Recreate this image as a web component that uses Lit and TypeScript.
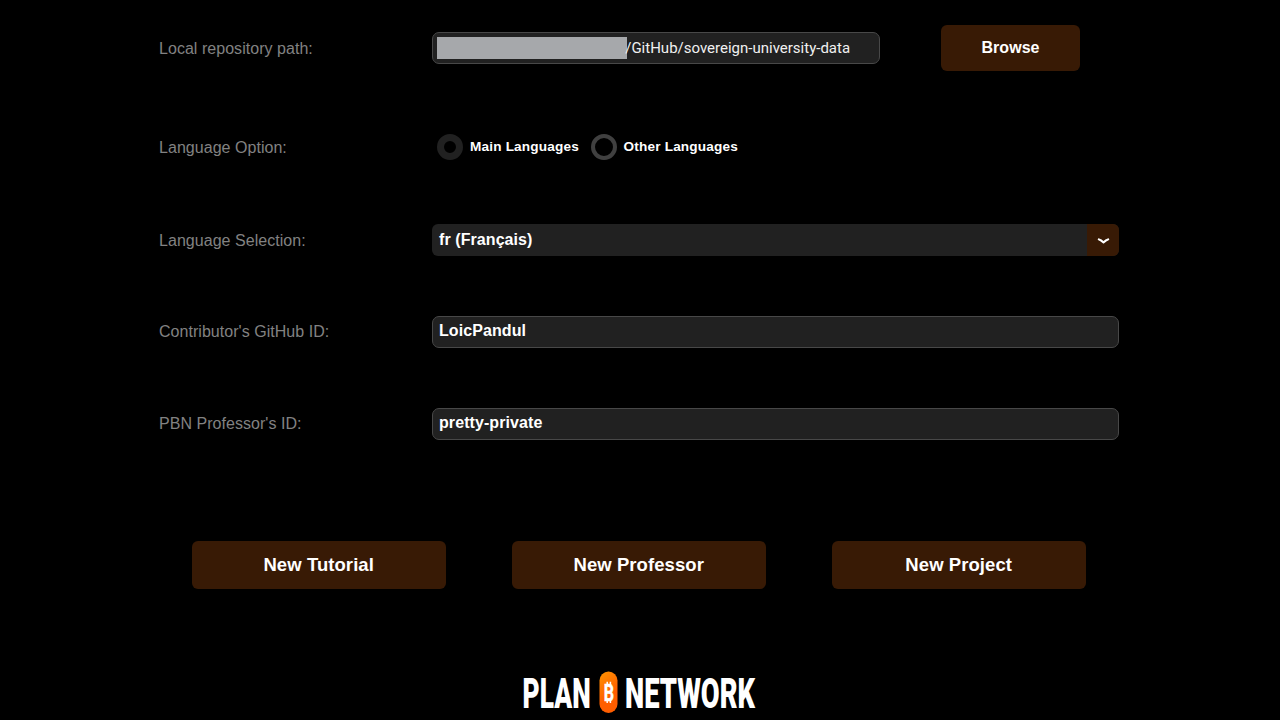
import { LitElement, html, css } from "lit";
import { customElement } from "lit/decorators.js";

@customElement("app-root")
export class AppRoot extends LitElement {
  static styles = css`
    :host {
      display: block;
      width: 1280px;
      height: 720px;
      overflow: hidden;
      background: #000;
      color: #fff;
      font-family: "Liberation Sans", Arial, sans-serif;
    }
    * { box-sizing: border-box; }
    .page { display: flex; flex-direction: column; height: 720px; }
    .form {
      display: grid;
      grid-template-columns: 272.5px 687.5px;
      grid-template-rows: 96px 102px 84px 100px 84px;
      padding-left: 159px;
      align-items: center;
    }
    .label { color: #828282; font-size: 16px; line-height: 20px; letter-spacing: 0.04px; padding-top: 1px; }
    .label.text-input { padding: 0 0 1px; }
    .row { display: flex; align-items: center; }
    .field {
      display: flex;
      align-items: center;
      height: 32.5px;
      width: 100%;
      padding: 0 6.5px 2px;
      border: 1px solid #484848;
      border-radius: 7px;
      background: #212121;
      font-size: 16px;
      font-weight: 700;
      line-height: 20px;
      letter-spacing: 0.08px;
    }
    .path {
      width: 448px;
      padding: 0 0 0 4.5px;
      font: 400 15px/20px Roboto, sans-serif;
      letter-spacing: 0;
      color: #f0f0f0;
    }
    .redacted { flex: none; width: 189.6px; height: 21.5px; background: #a6a8ab; }
    .path-text { margin-left: -1.4px; }
    button {
      border: 0;
      padding: 0;
      color: #fff;
      background: #381a05;
      border-radius: 6px;
      font-family: inherit;
      font-weight: 700;
    }
    .browse { width: 139px; height: 46px; margin-left: 61.5px; font-size: 16px; letter-spacing: 0.05px; }
    .radios { padding-left: 5.5px; font-size: 13.6px; font-weight: 700; letter-spacing: 0.18px; }
    .radio { display: flex; align-items: center; }
    .dot { width: 26px; height: 26px; border-radius: 50%; border: 4px solid #404040; margin-right: 7px; }
    .dot.checked { border: 7px solid #212121; }
    .radio + .radio { margin-left: 11.5px; }
    .radio-text { padding-bottom: 1px; }
    .select { border: 0; padding: 0 0 0 7.5px; border-radius: 6px; overflow: hidden; }
    .select-text { flex: 1; }
    .arrow { width: 32px; height: 33px; background: #381a05; }
    .actions { display: flex; gap: 66px; padding: 75px 0 0 191.7px; }
    .action { width: 254px; height: 48px; font-size: 18.5px; letter-spacing: 0.07px; }
    .brand { display: block; margin: 81px 0 0 520px; overflow: visible; }
    .word { font-family: Roboto, sans-serif; font-weight: 900; font-size: 42.5px; fill: #fff; }
    .coin { font-family: Roboto, sans-serif; font-weight: 700; font-size: 23.5px; fill: #fff; }
  `;

  private readonly actions = ["New Tutorial", "New Professor", "New Project"];

  render() {
    return html`
      <main class="page">
        <section class="form">
          <div class="label">Local repository path:</div>
          <div class="row">
            <div class="field path">
              <span class="redacted"></span>
              <span class="path-text">/GitHub/sovereign-university-data</span>
            </div>
            <button class="browse">Browse</button>
          </div>

          <div class="label">Language Option:</div>
          <div class="row radios">
            <div class="radio"><span class="dot checked"></span><span class="radio-text">Main Languages</span></div>
            <div class="radio"><span class="dot"></span><span class="radio-text">Other Languages</span></div>
          </div>

          <div class="label">Language Selection:</div>
          <div class="field select">
            <span class="select-text">fr (Français)</span>
            <svg class="arrow" viewBox="0 0 32 33">
              <path d="M11.8 15.4 L13.6 16.2 L16.5 18.4 L19.4 16.2 L21.2 15.4" fill="none" stroke="#fff" stroke-width="2.1" stroke-linecap="round" stroke-linejoin="round" />
            </svg>
          </div>

          <div class="label text-input">Contributor's GitHub ID:</div>
          <div class="field">LoicPandul</div>

          <div class="label text-input">PBN Professor's ID:</div>
          <div class="field">pretty-private</div>
        </section>

        <nav class="actions">
          ${this.actions.map((a) => html`<button class="action">${a}</button>`)}
        </nav>

        <svg class="brand" width="240" height="46" viewBox="0 0 240 46">
          <defs>
            <linearGradient id="orange" x1="0" y1="0" x2="0.35" y2="1">
              <stop offset="0" stop-color="#ff9500" />
              <stop offset="0.7" stop-color="#ff5e00" />
            </linearGradient>
          </defs>
          <text class="word" x="2.6" y="37.6" textLength="68" lengthAdjust="spacingAndGlyphs">PLAN</text>
          <rect x="79.5" y="1.5" width="18" height="41.5" rx="9" fill="url(#orange)" />
          <text class="coin" x="83.8" y="30.7" textLength="10.3" lengthAdjust="spacingAndGlyphs" stroke="#fff" stroke-width="0.5">B</text>
          <path d="M87.2 11.8v3M90.4 11.8v3M87.2 30v3M90.4 30v3" stroke="#fff" stroke-width="1.5" />
          <text class="word" x="105" y="37.6" textLength="130" lengthAdjust="spacingAndGlyphs">NETWORK</text>
        </svg>
      </main>
    `;
  }
}
